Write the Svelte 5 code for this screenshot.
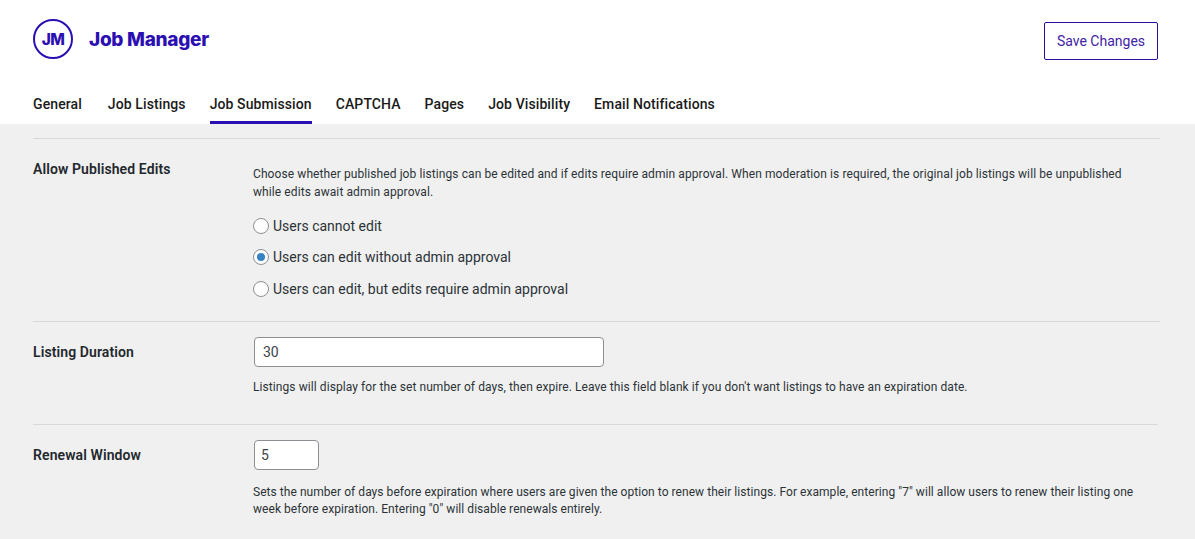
<script>
  const tabs = ['General', 'Job Listings', 'Job Submission', 'CAPTCHA', 'Pages', 'Job Visibility', 'Email Notifications'];
  const active = 'Job Submission';
  const editOptions = ['Users cannot edit', 'Users can edit without admin approval', 'Users can edit, but edits require admin approval'];
  let edits = 1;
</script>

<div class="page">
  <header>
    <div class="top">
      <div class="brand">
        <div class="logo">JM</div>
        <span class="name">Job Manager</span>
      </div>
      <button class="save">Save Changes</button>
    </div>
    <nav>
      {#each tabs as tab}
        <span class="tab" class:active={tab === active}>{tab}</span>
      {/each}
    </nav>
  </header>

  <main>
    <section class="row first">
      <h3>Allow Published Edits</h3>
      <div class="field">
        <p class="desc lead">Choose whether published job listings can be edited and if edits require admin approval. When moderation is required, the original job listings will be unpublished while edits await admin approval.</p>
        <div class="options">
          {#each editOptions as option, i}
            <label class="option">
              <span class="radio" class:on={edits === i}></span>
              {option}
            </label>
          {/each}
        </div>
      </div>
    </section>

    <section class="row second">
      <h3>Listing Duration</h3>
      <div class="field">
        <div class="input wide">30</div>
        <p class="desc">Listings will display for the set number of days, then expire. Leave this field blank if you don't want listings to have an expiration date.</p>
      </div>
    </section>

    <section class="row third">
      <h3>Renewal Window</h3>
      <div class="field">
        <div class="input small">5</div>
        <p class="desc">Sets the number of days before expiration where users are given the option to renew their listings. For example, entering "7" will allow users to renew their listing one week before expiration. Entering "0" will disable renewals entirely.</p>
      </div>
    </section>
  </main>
</div>

<style>
  :global(body) {
    margin: 0;
    background: #f0f0f0;
  }
  .page {
    height: 539px;
    overflow: hidden;
    font-family: Roboto, "Liberation Sans", sans-serif;
    color: #1d2327;
  }
  header {
    background: #fff;
    height: 124px;
    padding: 0 37px 0 33px;
    box-sizing: border-box;
    display: flex;
    flex-direction: column;
  }
  .top {
    display: flex;
    justify-content: space-between;
    align-items: flex-start;
    padding-top: 19px;
    height: 65px;
  }
  .brand {
    display: flex;
    align-items: center;
    gap: 16px;
    height: 40px;
  }
  .logo {
    width: 40px;
    height: 40px;
    box-sizing: border-box;
    border: 2px solid #2b0fb3;
    border-radius: 50%;
    color: #2b0fb3;
    font-family: Inter, sans-serif;
    font-weight: 800;
    font-size: 15.5px;
    letter-spacing: -0.6px;
    display: flex;
    align-items: center;
    justify-content: center;
  }
  .name {
    color: #2b0fb3;
    font-family: Inter, sans-serif;
    font-weight: 800;
    font-size: 19px;
    letter-spacing: -0.3px;
  }
  .save {
    margin-top: 3px;
    width: 114px;
    height: 38px;
    background: #fff;
    border: 1px solid #2b0c9c;
    border-radius: 2px;
    color: #3f22a8;
    font-family: Roboto, sans-serif;
    font-size: 14px;
    padding: 0;
  }
  nav {
    display: flex;
    gap: 24px;
    margin-top: auto;
  }
  .tab {
    font-size: 14px;
    font-weight: 500;
    line-height: 20px;
    padding-bottom: 7px;
    border-bottom: 3px solid transparent;
    color: #1a1a1a;
    letter-spacing: 0.1px;
  }
  .tab:first-child {
    margin-right: 2px;
  }
  .tab.active {
    border-bottom-color: #2b0fb3;
  }
  main {
    padding: 14px 35px 0 33px;
  }
  .row {
    display: flex;
    border-top: 1px solid #d9d9d9;
  }
  .row.first {
    height: 183px;
    padding-top: 21px;
    box-sizing: border-box;
  }
  .row.second {
    height: 103px;
    padding-top: 15px;
    box-sizing: border-box;
  }
  .row.third {
    padding-top: 15px;
    margin-right: 2px;
  }
  h3 {
    width: 220px;
    margin: 0;
    font-size: 14px;
    font-weight: 600;
    line-height: 18px;
    color: #23282d;
    flex-shrink: 0;
    letter-spacing: 0.1px;
  }
  .second h3, .third h3 {
    padding-top: 6px;
  }
  .field {
    flex: 1;
    min-width: 0;
  }
  .desc {
    margin: 12px 0 0;
    font-size: 12px;
    line-height: 17.5px;
    color: #2c3338;
    max-width: 890px;
    letter-spacing: 0.08px;
  }
  .third .desc {
    margin-top: 14px;
    line-height: 17px;
    letter-spacing: 0.05px;
  }
  .desc.lead {
    margin: 6px 0 0;
    letter-spacing: 0.09px;
  }
  .options {
    margin-top: 9px;
    display: flex;
    flex-direction: column;
  }
  .option {
    display: flex;
    align-items: center;
    gap: 4px;
    height: 31.5px;
    font-size: 14px;
    color: #2c3338;
  }
  .radio {
    width: 16px;
    height: 16px;
    box-sizing: border-box;
    border: 1px solid #8c8f94;
    border-radius: 50%;
    background: #fff;
    display: flex;
    align-items: center;
    justify-content: center;
  }
  .radio.on::before {
    content: "";
    width: 8px;
    height: 8px;
    border-radius: 50%;
    background: #3582c4;
  }
  .input {
    box-sizing: border-box;
    height: 30px;
    margin-left: 1px;
    background: #fff;
    border: 1px solid #8c8f94;
    border-radius: 4px;
    font-size: 14px;
    line-height: 28px;
    color: #3c434a;
  }
  .input.wide {
    width: 350px;
    padding-left: 8px;
  }
  .input.small {
    width: 65px;
    padding-left: 6px;
  }
</style>
